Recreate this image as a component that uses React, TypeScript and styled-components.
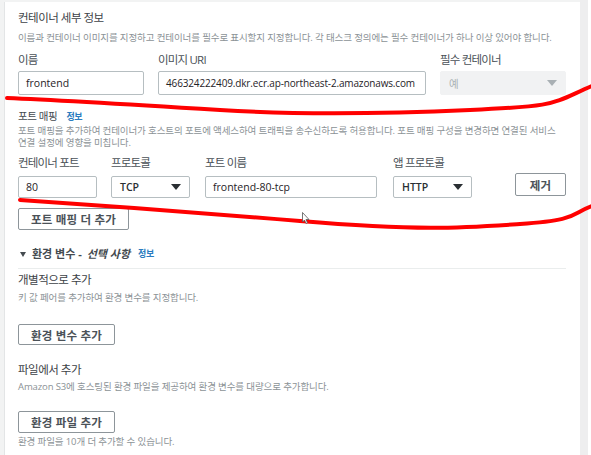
import React from "react";
import styled, { createGlobalStyle } from "styled-components";

const Global = createGlobalStyle`
  html, body { margin: 0; padding: 0; background: #ffffff; }
  body { font-family: "Open Sans", "Noto Sans CJK KR", sans-serif; }
  * { box-sizing: border-box; }
`;

const Page = styled.div`
  position: relative;
  width: 591px;
  height: 455px;
  overflow: hidden;
  display: flex;
  background: #ffffff;
`;

const Gutter = styled.div`
  width: 4px;
  background: #f2f3f3;
`;

const CardArea = styled.div`
  display: flex;
  flex-direction: column;
  width: 576px;
  background: #f2f3f3;
  padding-top: 2px;
`;

const Card = styled.div`
  flex: 1;
  background: #ffffff;
  border-left: 1px solid #e3e5e6;
  padding: 8px 14px 0 13px;
  display: flex;
  flex-direction: column;
`;

const Scroll = styled.div`
  width: 8px;
  background: #eeeeef;
`;

const Title = styled.div<{ $mt?: number }>`
  margin-top: ${(p) => p.$mt ?? 0}px;
  font-size: 11.5px;
  line-height: 16px;
  letter-spacing: -0.5px;
  color: #3d4247;
  white-space: nowrap;
`;

const Desc = styled.div<{ $mt?: number; $lh?: number }>`
  margin-top: ${(p) => p.$mt ?? 0}px;
  font-size: 9.5px;
  line-height: ${(p) => p.$lh ?? 14}px;
  letter-spacing: -0.12px;
  color: #8b9296;
  white-space: nowrap;
`;

const SubHead = styled.div<{ $mt?: number }>`
  margin-top: ${(p) => p.$mt ?? 0}px;
  font-size: 10.5px;
  line-height: 14px;
  letter-spacing: -0.4px;
  color: #444b50;
  display: flex;
  align-items: baseline;
  gap: 6px;
`;

const InfoLink = styled.span`
  font-size: 9px;
  font-weight: 700;
  color: #2b7cc0;
  letter-spacing: -0.3px;
  margin-left: 3px;
`;

const Row = styled.div<{ $mt?: number }>`
  margin-top: ${(p) => p.$mt ?? 0}px;
  display: flex;
  align-items: flex-end;
`;

const Field = styled.div<{ $w: number; $ml?: number }>`
  width: ${(p) => p.$w}px;
  margin-left: ${(p) => p.$ml ?? 0}px;
  display: flex;
  flex-direction: column;
`;

const Label = styled.div`
  font-size: 11.5px;
  line-height: 16px;
  letter-spacing: -0.8px;
  color: #4a5157;
  white-space: nowrap;
`;

const Input = styled.div<{ $h: number; $mt: number; $tight?: boolean }>`
  margin-top: ${(p) => p.$mt}px;
  height: ${(p) => p.$h}px;
  border: 1px solid #b6bec1;
  border-radius: 2px;
  background: #fff;
  padding: 0 7px;
  display: flex;
  align-items: center;
  font-size: ${(p) => (p.$tight ? 10 : 10.5)}px;
  letter-spacing: ${(p) => (p.$tight ? -0.15 : 0)}px;
  color: #1f2327;
  white-space: nowrap;
  overflow: hidden;
`;

const Select = styled(Input)<{ $disabled?: boolean }>`
  justify-content: space-between;
  padding: 0 8px;
  font-weight: ${(p) => (p.$disabled ? 400 : 600)};
  background: ${(p) => (p.$disabled ? "#f1f2f3" : "#fff")};
  border-color: ${(p) => (p.$disabled ? "#f1f2f3" : "#b6bec1")};
  color: ${(p) => (p.$disabled ? "#aab2b6" : "#2a2f33")};
`;

const Caret = styled.span<{ $disabled?: boolean }>`
  width: 0;
  height: 0;
  border-left: 5px solid transparent;
  border-right: 5px solid transparent;
  border-top: 6px solid ${(p) => (p.$disabled ? "#a9b0b4" : "#2a2f33")};
`;

const Button = styled.div<{ $w: number; $h: number; $mt?: number }>`
  margin-top: ${(p) => p.$mt ?? 0}px;
  width: ${(p) => p.$w}px;
  height: ${(p) => p.$h}px;
  border: 1px solid #8d959a;
  border-radius: 2px;
  background: #fff;
  display: flex;
  align-items: center;
  justify-content: center;
  font-size: 11.5px;
  font-weight: 700;
  letter-spacing: 0.2px;
  color: #4b5258;
  white-space: nowrap;
`;

const RemoveButton = styled(Button)`
  margin-left: auto;
  margin-bottom: 2px;
`;

const Section = styled.div<{ $mt?: number }>`
  margin-top: ${(p) => p.$mt ?? 0}px;
  font-size: 11px;
  line-height: 16px;
  font-weight: 700;
  letter-spacing: 0px;
  color: #444b50;
  display: flex;
  align-items: center;
  gap: 5px;
  padding-left: 2px;
`;

const Tri = styled.span`
  width: 0;
  height: 0;
  border-left: 3.5px solid transparent;
  border-right: 3.5px solid transparent;
  border-top: 5px solid #444b50;
  margin-right: 1px;
`;

const Italic = styled.em`
  font-style: italic;
`;

const Divider = styled.div<{ $mt?: number }>`
  margin-top: ${(p) => p.$mt ?? 0}px;
  height: 1px;
  background: #eaeded;
`;

const Overlay = styled.svg`
  position: absolute;
  left: 0;
  top: 0;
  pointer-events: none;
`;

export default function App() {
  return (
    <>
      <Global />
      <Page>
        <Gutter />
        <CardArea>
          <Card>
            <Title>컨테이너 세부 정보</Title>
            <Desc $mt={5}>
              이름과 컨테이너 이미지를 지정하고 컨테이너를 필수로 표시할지 지정합니다. 각 태스크 정의에는 필수 컨테이너가 하나 이상 있어야 합니다.
            </Desc>
            <Row $mt={7}>
              <Field $w={126}>
                <Label>이름</Label>
                <Input $h={24} $mt={3}>frontend</Input>
              </Field>
              <Field $w={268} $ml={14}>
                <Label>이미지 URI</Label>
                <Input $h={24} $mt={3} $tight>466324222409.dkr.ecr.ap-northeast-2.amazonaws.com</Input>
              </Field>
              <Field $w={126} $ml={14}>
                <Label>필수 컨테이너</Label>
                <Select $h={24} $mt={3} $disabled>
                  예<Caret $disabled />
                </Select>
              </Field>
            </Row>

            <SubHead $mt={14}>
              포트 매핑 <InfoLink>정보</InfoLink>
            </SubHead>
            <Desc $mt={1} $lh={12}>
              포트 매핑을 추가하여 컨테이너가 호스트의 포트에 액세스하여 트래픽을 송수신하도록 허용합니다. 포트 매핑 구성을 변경하면 연결된 서비스
              <br />
              연결 설정에 영향을 미칩니다.
            </Desc>
            <Row $mt={6}>
              <Field $w={79}>
                <Label>컨테이너 포트</Label>
                <Input $h={22} $mt={5}>80</Input>
              </Field>
              <Field $w={79} $ml={14}>
                <Label>프로토콜</Label>
                <Select $h={22} $mt={5}>
                  TCP<Caret />
                </Select>
              </Field>
              <Field $w={172} $ml={15}>
                <Label>포트 이름</Label>
                <Input $h={22} $mt={5}>frontend-80-tcp</Input>
              </Field>
              <Field $w={79} $ml={16}>
                <Label>앱 프로토콜</Label>
                <Select $h={22} $mt={5}>
                  HTTP<Caret />
                </Select>
              </Field>
              <RemoveButton $w={51} $h={23}>제거</RemoveButton>
            </Row>
            <Button $w={111} $h={22} $mt={10}>포트 매핑 더 추가</Button>

            <Section $mt={16}>
              <Tri />
              환경 변수 - <Italic>선택 사항</Italic>
              <InfoLink>정보</InfoLink>
            </Section>
            <Divider $mt={6} />
            <Title $mt={3}>개별적으로 추가</Title>
            <Desc $mt={3}>키 값 페어를 추가하여 환경 변수를 지정합니다.</Desc>
            <Button $w={97} $h={21} $mt={19}>환경 변수 추가</Button>

            <Title $mt={17}>파일에서 추가</Title>
            <Desc $mt={2}>Amazon S3에 호스팅된 환경 파일을 제공하여 환경 변수를 대량으로 추가합니다.</Desc>
            <Button $w={97} $h={22} $mt={17}>환경 파일 추가</Button>
            <Desc $mt={2}>환경 파일을 10개 더 추가할 수 있습니다.</Desc>
          </Card>
        </CardArea>
        <Scroll />

        <Overlay width="591" height="455" viewBox="0 0 591 455">
          <path
            d="M 7 98 C 60 100, 140 105, 220 110 S 380 114, 470 110 S 550 104, 592 86"
            fill="none"
            stroke="#ff0000"
            strokeWidth="4"
            strokeLinecap="round"
          />
          <path
            d="M 20 200 C 80 204, 180 211, 300 221 S 460 228, 520 224 S 570 214, 592 206"
            fill="none"
            stroke="#ff0000"
            strokeWidth="4"
            strokeLinecap="round"
          />
          <path
            d="M 302.5 212.5 L 302.5 222 L 304.5 220 L 306 223.5 L 307.5 222.8 L 306 219.5 L 309 219.5 Z"
            fill="#ffffff"
            stroke="#555"
            strokeWidth="0.8"
          />
        </Overlay>
      </Page>
    </>
  );
}
